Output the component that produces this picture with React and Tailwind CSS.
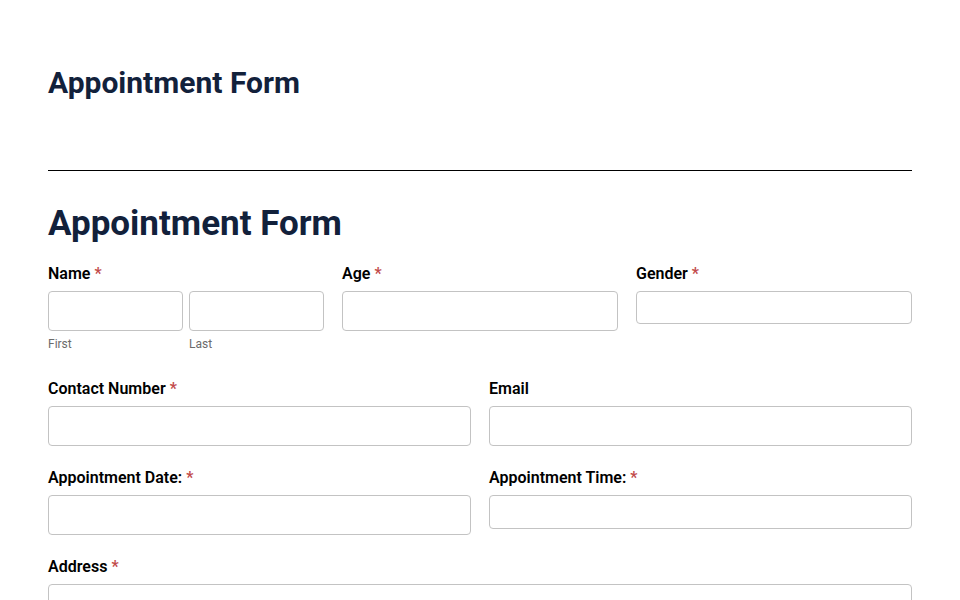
import React from 'react';

const Req = () => <span className="text-[#c24b4b] ml-1">*</span>;

const Label = ({ children, required }) => (
    <label className="block text-[16px] font-semibold text-black leading-[22px] mb-[6px]">
        {children}
        {required && <Req />}
    </label>
);

const Input = ({ h = 'h-[40px]' }) => (
    <input className={`block w-full ${h} border border-[#c3c3c3] rounded-[4px] bg-white px-2 outline-none`} />
);

export default function App() {
    return (
        <div className="min-h-screen bg-white font-['Roboto',sans-serif] px-[48px]">
            <div className="pt-[63px] pb-[67px]">
                <h1 className="text-[30px] font-bold text-[#12213b] leading-[40px]">Appointment Form</h1>
            </div>
            <hr className="border-0 border-t border-black" />
            <h2 className="mt-[30px] text-[35px] font-bold text-[#12213b] leading-[46px]">Appointment Form</h2>

            <div className="mt-[16px] grid grid-cols-3 gap-x-[18px]">
                <div>
                    <Label required>Name</Label>
                    <div className="grid grid-cols-2 gap-x-[6px]">
                        <div>
                            <Input />
                            <div className="mt-[5px] text-[12px] text-[#6b6b6b] leading-[16px]">First</div>
                        </div>
                        <div>
                            <Input />
                            <div className="mt-[5px] text-[12px] text-[#6b6b6b] leading-[16px]">Last</div>
                        </div>
                    </div>
                </div>
                <div>
                    <Label required>Age</Label>
                    <Input />
                </div>
                <div>
                    <Label required>Gender</Label>
                    <Input h="h-[33px]" />
                </div>
            </div>

            <div className="mt-[26px] grid grid-cols-2 gap-x-[18px]">
                <div>
                    <Label required>Contact Number</Label>
                    <Input />
                </div>
                <div>
                    <Label>Email</Label>
                    <Input />
                </div>
            </div>

            <div className="mt-[21px] grid grid-cols-2 gap-x-[18px]">
                <div>
                    <Label required>Appointment Date:</Label>
                    <Input />
                </div>
                <div>
                    <Label required>Appointment Time:</Label>
                    <Input h="h-[34px]" />
                </div>
            </div>

            <div className="mt-[21px]">
                <Label required>Address</Label>
                <Input />
            </div>
        </div>
    );
}
